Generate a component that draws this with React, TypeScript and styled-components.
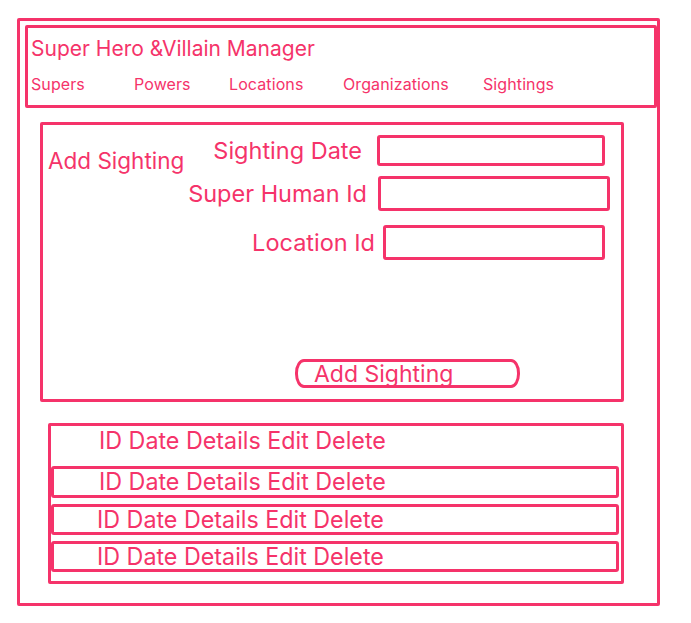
import styled, { createGlobalStyle } from "styled-components";

const ink = "#f5336a";

const GlobalStyle = createGlobalStyle`
  body {
    margin: 0;
    background: #ffffff;
    font-family: Inter, "Liberation Sans", sans-serif;
    color: ${ink};
  }
`;

const Page = styled.div`
  padding: 18px 0 0 17px;
`;

const Sheet = styled.div`
  width: 643px;
  height: 588px;
  box-sizing: border-box;
  border: 3px solid ${ink};
  border-radius: 2px;
  padding: 4px 0 0 5px;
  display: flex;
  flex-direction: column;
`;

const Header = styled.header`
  width: 632px;
  height: 83px;
  box-sizing: border-box;
  border: 3px solid ${ink};
  border-radius: 2px;
  padding: 8px 0 0 3px;
`;

const Title = styled.h1`
  margin: 0;
  font-size: 21px;
  font-weight: 400;
  line-height: 26px;
`;

const Nav = styled.nav`
  display: grid;
  grid-template-columns: 103px 95px 114px 140px auto;
  margin-top: 12px;
`;

const NavItem = styled.a`
  font-size: 16px;
  line-height: 20px;
  letter-spacing: 0.1px;
  color: ${ink};
  text-decoration: none;
`;

const FormPanel = styled.section`
  width: 584px;
  height: 280px;
  box-sizing: border-box;
  margin: 14px 0 0 15px;
  border: 3px solid ${ink};
  border-radius: 2px;
  padding: 10px 11px 11px 5px;
  display: flex;
  flex-direction: column;
`;

const FormTop = styled.div`
  display: flex;
  justify-content: space-between;
`;

const FormTitle = styled.h2`
  flex-shrink: 0;
  margin: 12px 0 0;
  font-size: 22.5px;
  font-weight: 400;
  line-height: 28px;
  white-space: nowrap;
`;

const Fields = styled.div`
  display: flex;
  flex-direction: column;
`;

const FieldRow = styled.label<{ $offset: number; $gap: number; $top: number }>`
  display: flex;
  align-items: center;
  justify-content: flex-end;
  gap: ${({ $gap }) => $gap}px;
  margin-top: ${({ $top }) => $top}px;
  margin-right: ${({ $offset }) => $offset}px;
`;

const FieldLabel = styled.span`
  font-size: 23.5px;
  line-height: 28px;
  white-space: nowrap;
`;

const FieldBox = styled.input<{ $h: number; $w: number }>`
  width: ${({ $w }) => $w}px;
  height: ${({ $h }) => $h}px;
  box-sizing: border-box;
  border: 3px solid ${ink};
  border-radius: 3px;
  background: transparent;
  outline: none;
  font: inherit;
`;

const SubmitButton = styled.button`
  margin: auto 0 0 247px;
  width: 225px;
  height: 29px;
  box-sizing: border-box;
  border: 3px solid ${ink};
  border-radius: 9px / 14px;
  background: #ffffff;
  color: ${ink};
  font-family: Inter, "Liberation Sans", sans-serif;
  font-size: 23px;
  line-height: 22px;
  text-align: left;
  padding: 0 0 0 16px;
`;

const ListPanel = styled.section`
  width: 576px;
  height: 161px;
  box-sizing: border-box;
  margin: 21px 0 0 23px;
  border: 3px solid ${ink};
  border-radius: 2px;
  padding: 0 2px 0 0;
  display: flex;
  flex-direction: column;
  gap: 6px;
`;

const ListHeader = styled.div`
  height: 30px;
  margin-bottom: 4px;
  padding-left: 48px;
  display: flex;
  align-items: center;
`;

const ListRow = styled.div<{ $h: number; $indent: number }>`
  height: ${({ $h }) => $h}px;
  box-sizing: border-box;
  border: 3px solid ${ink};
  border-radius: 3px;
  padding-left: ${({ $indent }) => $indent}px;
  display: flex;
  align-items: center;
`;

const RowText = styled.span`
  display: inline-block;
  font-size: 24px;
  line-height: 26px;
  white-space: nowrap;
  transform: scaleX(0.97);
  transform-origin: left center;
`;

const fields = [
  { label: "Sighting Date", w: 228, h: 31, offset: 5, gap: 15, top: 0 },
  { label: "Super Human Id", w: 232, h: 35, offset: 0, gap: 11, top: 10 },
  { label: "Location Id", w: 222, h: 35, offset: 5, gap: 8, top: 14 },
];

const rows = [
  { h: 32, indent: 45 },
  { h: 31, indent: 43 },
  { h: 31, indent: 43 },
];

export default function App() {
  return (
    <>
      <GlobalStyle />
      <Page>
        <Sheet>
          <Header>
            <Title>Super Hero &amp;Villain Manager</Title>
            <Nav>
              <NavItem>Supers</NavItem>
              <NavItem>Powers</NavItem>
              <NavItem>Locations</NavItem>
              <NavItem>Organizations</NavItem>
              <NavItem>Sightings</NavItem>
            </Nav>
          </Header>

          <FormPanel>
            <FormTop>
              <FormTitle>Add Sighting</FormTitle>
              <Fields>
                {fields.map((f) => (
                  <FieldRow key={f.label} $offset={f.offset} $gap={f.gap} $top={f.top}>
                    <FieldLabel>{f.label}</FieldLabel>
                    <FieldBox $w={f.w} $h={f.h} />
                  </FieldRow>
                ))}
              </Fields>
            </FormTop>
            <SubmitButton>Add Sighting</SubmitButton>
          </FormPanel>

          <ListPanel>
            <ListHeader>
              <RowText>ID Date Details Edit Delete</RowText>
            </ListHeader>
            {rows.map((row, i) => (
              <ListRow key={i} $h={row.h} $indent={row.indent}>
                <RowText>ID Date Details Edit Delete</RowText>
              </ListRow>
            ))}
          </ListPanel>
        </Sheet>
      </Page>
    </>
  );
}
